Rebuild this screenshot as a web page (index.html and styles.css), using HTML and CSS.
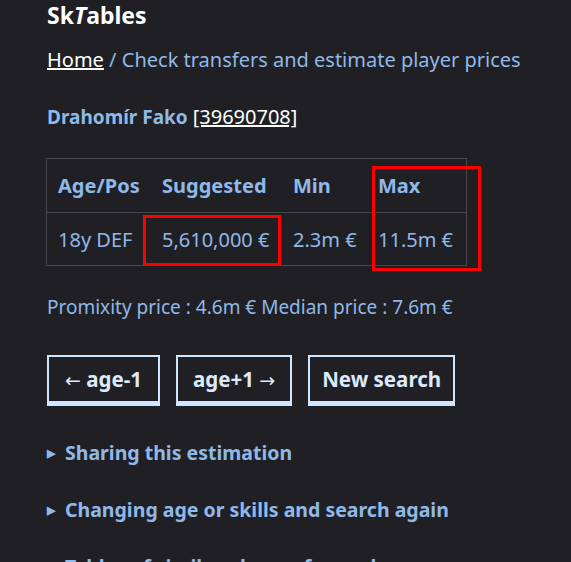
FILE: index.html
```html
<!DOCTYPE html>
<html>
<head>
<meta charset="utf-8">
<link rel="stylesheet" href="styles.css">
</head>
<body>
<main class="page">
  <h1 class="logo">Sk<i>T</i>ables</h1>
  <p class="crumbs"><a href="#" class="home">Home</a> / Check transfers and estimate player prices</p>
  <p class="player">Drahomír Fako <a href="#" class="pid">[39690708]</a></p>
  <div class="table-wrap">
    <table class="prices">
      <thead>
        <tr><th>Age/Pos</th><th>Suggested</th><th>Min</th><th>Max</th></tr>
      </thead>
      <tbody>
        <tr><td>18y DEF</td><td class="sugg">5,610,000 €</td><td>2.3m €</td><td>11.5m €</td></tr>
      </tbody>
    </table>
    <span class="mark mark-sugg"></span>
    <span class="mark mark-max"></span>
  </div>
  <p class="extra">Promixity price : 4.6m € Median price : 7.6m €</p>
  <div class="buttons">
    <button class="btn btn-prev"><span class="arrow">←</span> age-1</button>
    <button class="btn">age+1 <span class="arrow">→</span></button>
    <button class="btn btn-wide">New search</button>
  </div>
  <details class="sect first"><summary>Sharing this estimation</summary></details>
  <details class="sect"><summary>Changing age or skills and search again</summary></details>
  <details class="sect"><summary>Tables of similar players for each</summary></details>
</main>
</body>
</html>
```

FILE: styles.css
```css
html, body {
  margin: 0;
  padding: 0;
  background: #202024;
}
body {
  font-family: "Noto Sans", "Open Sans", sans-serif;
  color: #8fb9e8;
  font-size: 20px;
  overflow: hidden;
}
.page {
  padding: 0 0 0 47px;
}
.logo {
  margin: 0;
  font-size: 23px;
  line-height: 30px;
  font-weight: 700;
  color: #ffffff;
}
.logo i {
  font-style: italic;
}
.crumbs {
  margin: 13px 0 0;
  line-height: 34px;
  font-size: 20px;
}
.home {
  color: #ffffff;
  text-decoration: underline;
}
.player {
  margin: 23px 0 0;
  line-height: 34px;
  font-weight: 700;
  font-size: 19px;
}
.pid {
  font-weight: 400;
  font-size: 20px;
  color: #ffffff;
  text-decoration: underline;
}
.table-wrap {
  position: relative;
  margin: 24px 0 0 -1px;
  width: 440px;
}
.prices {
  border-collapse: collapse;
  border: 1px solid #47474b;
  font-size: 20px;
  table-layout: fixed;
  width: 419px;
  white-space: nowrap;
}
.prices th {
  text-align: left;
  font-weight: 700;
  height: 53px;
  padding: 0 0 0 11px;
  border-bottom: 1px solid #47474b;
}
.prices td {
  height: 52px;
  padding: 0 0 0 11px;
}
.prices th:first-child { width: 93px; }
.prices th:nth-child(2) { width: 120px; }
.prices th:nth-child(3) { width: 74px; }
.prices th:nth-child(4) { width: 88px; }
.mark {
  position: absolute;
  border: 3px solid #ff0000;
  box-sizing: border-box;
}
.mark-sugg {
  left: 97px;
  top: 57px;
  width: 138px;
  height: 51px;
}
.mark-max {
  left: 326px;
  top: 8px;
  width: 109px;
  height: 105px;
}
.extra {
  margin: 28px 0 0;
  font-size: 19px;
  line-height: 26px;
}
.buttons {
  display: flex;
  gap: 16px;
  margin-top: 35px;
}
.btn {
  font-family: inherit;
  font-size: 20.5px;
  font-weight: 700;
  color: #dce9fb;
  background: #202024;
  border: 2px solid #cfe6ff;
  border-bottom-width: 5px;
  padding: 0 15px;
  height: 51px;
  line-height: 40px;
  cursor: pointer;
}
.btn-prev {
  padding: 0 16px;
}
.btn-wide {
  padding: 0 12px;
}
.arrow {
  font-family: "DejaVu Sans", sans-serif;
  font-weight: 400;
  font-size: 19px;
}
.sect {
  margin-top: 29px;
}
.sect.first {
  margin-top: 33px;
}
.sect summary {
  list-style: none;
  font-weight: 700;
  font-size: 19.5px;
  line-height: 28px;
  cursor: pointer;
}
.sect summary::-webkit-details-marker {
  display: none;
}
.sect summary::before {
  content: "▶";
  display: inline-block;
  width: 18px;
  font-size: 11px;
  vertical-align: 3px;
}
```
